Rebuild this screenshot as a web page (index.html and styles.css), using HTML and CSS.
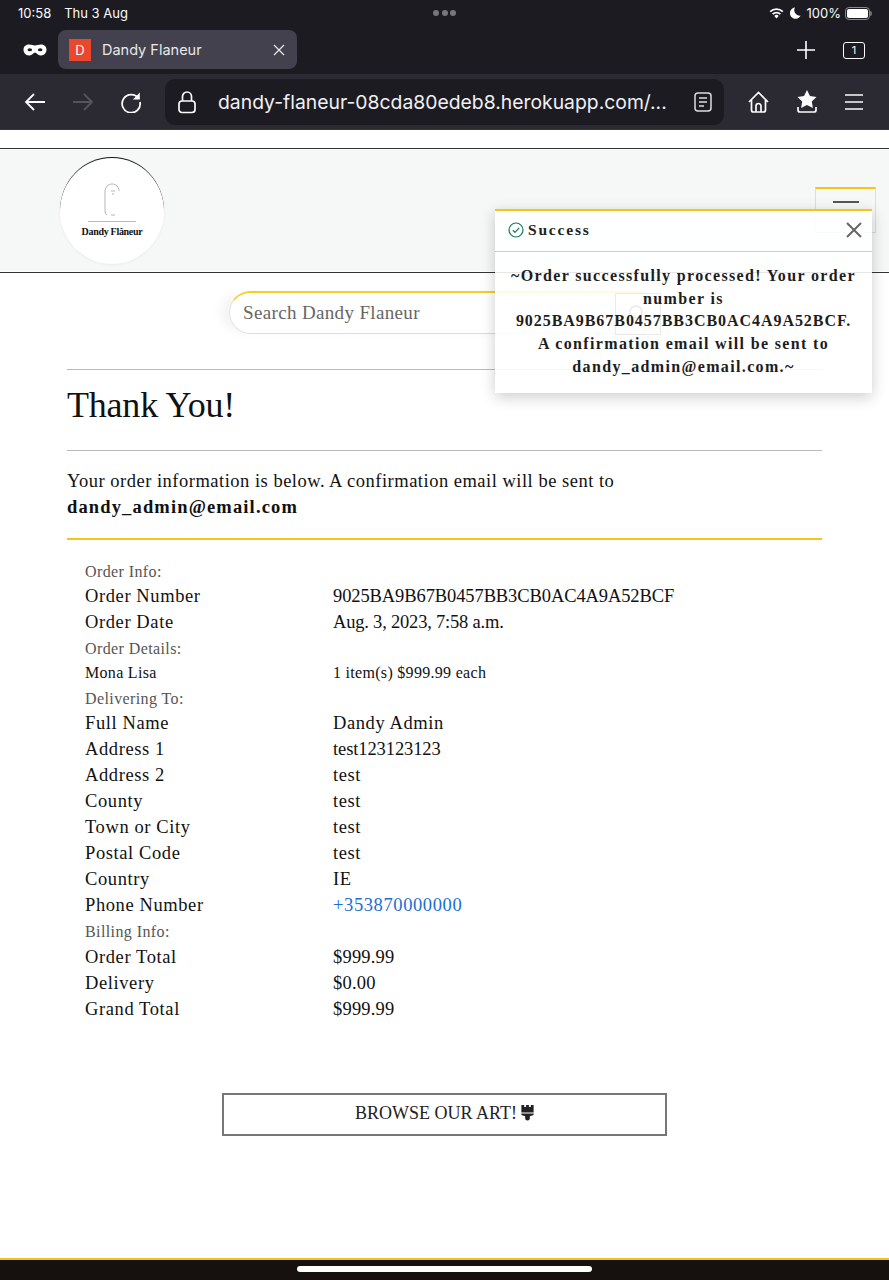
FILE: index.html
```html
<!DOCTYPE html>
<html lang="en">
<head>
<meta charset="utf-8">
<title>Dandy Flaneur</title>
<link rel="stylesheet" href="styles.css">
</head>
<body>
<div class="chrome">
  <div class="status">
    <div class="status-left"><span>10:58</span><span>Thu 3 Aug</span></div>
    <div class="status-dots"><i></i><i></i><i></i></div>
    <div class="status-right">
      <svg width="15" height="12" viewBox="0 0 15 12"><path d="M7.500 11.500 5.300 9a3 3 0 0 1 4.400 0z" fill="#fff"/><path d="M3.600 7.200a5.600 5.600 0 0 1 7.800 0M1.200 4.600a9 9 0 0 1 12.600 0" fill="none" stroke="#fff" stroke-width="1.700"/></svg>
      <svg width="11" height="12" viewBox="0 0 11 12"><path d="M5 .6a5.600 5.600 0 1 0 5.600 8A5.400 5.400 0 0 1 5 .6z" fill="#fff"/></svg>
      <span>100%</span>
      <span class="battery"><span class="battery-fill"></span></span>
    </div>
  </div>
  <div class="tabs">
    <svg class="mask" width="24" height="12" viewBox="0 0 24 12"><path fill-rule="evenodd" fill="#fff" d="M6 .5c2.500 0 4.200 1 6 1s3.500-1 6-1c3.500 0 5.500 2.300 5.500 5.300S21.300 11.500 18 11.500c-3 0-4-2.800-6-2.800s-3 2.800-6 2.800C2.700 11.500.5 8.800.5 5.800S2.500.5 6 .5zM4.500 5.800a2.300 1.500 0 1 0 4.600 0a2.300 1.500 0 1 0-4.600 0zM14.900 5.800a2.300 1.500 0 1 0 4.600 0a2.300 1.500 0 1 0-4.600 0z"/></svg>
    <div class="tab">
      <span class="favicon">D</span>
      <span class="tab-title">Dandy Flaneur</span>
      <svg width="12" height="12" viewBox="0 0 12 12"><path d="M1 1l10 10M11 1 1 11" stroke="#e8e8ea" stroke-width="1.200"/></svg>
    </div>
    <div class="tabs-actions">
      <svg width="18" height="18" viewBox="0 0 18 18"><path d="M9 0v18M0 9h18" stroke="#fff" stroke-width="1.600"/></svg>
      <span class="tab-count">1</span>
    </div>
  </div>
  <div class="toolbar">
    <svg class="tool" width="22" height="18" viewBox="0 0 22 18"><path d="M21 9H2M10 1 2 9l8 8" fill="none" stroke="#fbfbfe" stroke-width="1.800"/></svg>
    <svg class="tool" width="22" height="18" viewBox="0 0 22 18"><path d="M1 9h19M12 1l8 8-8 8" fill="none" stroke="#55545c" stroke-width="1.800"/></svg>
    <svg class="tool" width="22" height="22" viewBox="0 0 22 22"><path d="M18.500 7.500A9 9 0 1 0 20 11" fill="none" stroke="#fbfbfe" stroke-width="1.800"/><path d="M19.800 1.500v7h-7z" fill="#fbfbfe"/></svg>
    <div class="urlbar">
      <svg width="18" height="24" viewBox="0 0 18 24"><path d="M4.500 11V6.500a4.500 4.500 0 0 1 9 0V11" fill="none" stroke="#fbfbfe" stroke-width="1.700"/><rect x="1" y="11" width="16" height="11.500" rx="3" fill="none" stroke="#fbfbfe" stroke-width="1.700"/></svg>
      <span class="url">dandy-flaneur-08cda80edeb8.herokuapp.com/...</span>
      <svg width="18" height="20" viewBox="0 0 18 20"><rect x="1" y="1" width="16" height="18" rx="3" fill="none" stroke="#dcdce0" stroke-width="1.500"/><path d="M5 6h8M5 10h8M5 14h5" stroke="#dcdce0" stroke-width="1.500"/></svg>
    </div>
    <div class="toolbar-right">
      <svg width="21" height="22" viewBox="0 0 21 22"><path d="M1 11 10.500 1.500 20 11M3.500 9v10a2 2 0 0 0 2 2h10a2 2 0 0 0 2-2V9M8 21v-6a2.500 2.500 0 0 1 5 0v6" fill="none" stroke="#fbfbfe" stroke-width="1.700"/></svg>
      <svg width="20" height="23" viewBox="0 0 20 23"><path d="M10 0l3 6 6.500 1-4.700 4.500 1.100 6.500L10 15l-5.900 3 1.100-6.500L.5 7 7 6z" fill="#fbfbfe"/><path d="M1 17v3a2 2 0 0 0 2 2h14a2 2 0 0 0 2-2v-3" fill="none" stroke="#fbfbfe" stroke-width="1.700"/></svg>
      <svg width="18" height="16" viewBox="0 0 18 16"><path d="M0 1h18M0 8h18M0 15h18" stroke="#fbfbfe" stroke-width="1.500"/></svg>
    </div>
  </div>
</div>

<div class="page">
  <header class="site-header">
    <div class="logo">
      <svg width="30" height="36" viewBox="0 0 30 36"><path d="M10 33C8 32 8 30 8 27V10C8 5 11 2 15 2s7 3 7 7" fill="none" stroke="#b5b5b5" stroke-width="1"/><path d="M14 9h4M16 11v2M14 33h4" stroke="#b5b5b5" stroke-width="1"/></svg>
      <span class="logo-rule"></span>
      <span class="logo-name">Dandy Flâneur</span>
    </div>
    <button class="nav-toggle"><span></span></button>
  </header>

  <div class="search-row">
    <div class="search">
      <span class="search-text">Search Dandy Flaneur</span>
      <span class="search-button"><svg width="24" height="24" viewBox="0 0 24 24"><circle cx="10" cy="10" r="6" fill="none" stroke="#444" stroke-width="1.500"/></svg></span>
    </div>
  </div>

  <main class="content">
    <h1 class="title">Thank You!</h1>
    <p class="intro">Your order information is below. A confirmation email will be sent to <strong>dandy_admin@email.com</strong></p>
    <div class="order">
      <div class="section">Order Info:</div>
      <div class="row"><span>Order Number</span><span class="tight">9025BA9B67B0457BB3CB0AC4A9A52BCF</span></div>
      <div class="row"><span>Order Date</span><span class="tighter">Aug. 3, 2023, 7:58 a.m.</span></div>
      <div class="section">Order Details:</div>
      <div class="row small"><span>Mona Lisa</span><span>1 item(s) $999.99 each</span></div>
      <div class="section">Delivering To:</div>
      <div class="row"><span>Full Name</span><span>Dandy Admin</span></div>
      <div class="row"><span>Address 1</span><span class="tight">test123123123</span></div>
      <div class="row"><span>Address 2</span><span>test</span></div>
      <div class="row"><span>County</span><span>test</span></div>
      <div class="row"><span>Town or City</span><span>test</span></div>
      <div class="row"><span>Postal Code</span><span>test</span></div>
      <div class="row"><span>Country</span><span>IE</span></div>
      <div class="row"><span>Phone Number</span><a class="phone" href="#">+353870000000</a></div>
      <div class="section">Billing Info:</div>
      <div class="row"><span>Order Total</span><span class="money">$999.99</span></div>
      <div class="row"><span>Delivery</span><span class="money">$0.00</span></div>
      <div class="row"><span>Grand Total</span><span class="money">$999.99</span></div>
    </div>
    <div class="cta-row">
      <a class="cta" href="#">BROWSE OUR ART!
        <svg width="13" height="16" viewBox="0 0 13 17"><path d="M0 0h3v2h2V0h3v2h2V0h3v8H0z" fill="#222"/><path d="M0 9h13v1.500l-4 1.500v2a2.500 2.500 0 0 1-5 0v-2L0 10.500z" fill="#222"/></svg>
      </a>
    </div>
  </main>

  <aside class="toast">
    <div class="toast-head">
      <svg width="16" height="16" viewBox="0 0 16 16"><circle cx="8" cy="8" r="7" fill="none" stroke="#1a7a5a" stroke-width="1.200"/><path d="M4.800 8.200 7 10.300l4.200-4.500" fill="none" stroke="#1a7a5a" stroke-width="1.200"/></svg>
      <span class="toast-title">Success</span>
      <svg class="toast-close" width="16" height="16" viewBox="0 0 16 16"><path d="M1 1l14 14M15 1 1 15" stroke="#666" stroke-width="2"/></svg>
    </div>
    <p class="toast-body">~Order successfully processed! Your order number is <span class="toast-code">9025BA9B67B0457BB3CB0AC4A9A52BCF.</span> A confirmation email will be sent to dandy_admin@email.com.~</p>
  </aside>

  <footer class="footer"><span class="home-bar"></span></footer>
</div>
</body>
</html>
```
FILE: styles.css
```css
* { box-sizing: border-box; }
html, body { margin: 0; padding: 0; }
body { width: 889px; height: 1280px; overflow: hidden; background: #fff; font-family: "Liberation Serif", serif; color: #111; }
.chrome { font-family: Inter, "Liberation Sans", sans-serif; color: #fbfbfe; }
.status { height: 26px; background: #1c1b22; display: flex; align-items: center; justify-content: space-between; padding: 0 19px 0 18px; font-size: 13px; position: relative; }
.status-left { display: flex; gap: 13px; }
.status-dots { display: flex; gap: 2.500px; position: absolute; left: 433px; top: 10px; }
.status-dots i { width: 6px; height: 6px; border-radius: 50%; background: #77767c; }
.status-right { display: flex; align-items: center; gap: 6px; font-size: 13px; }
.battery { width: 25px; height: 13px; margin-left: -2px; border: 1px solid #8a8a8e; border-radius: 4px; padding: 1px; display: block; position: relative; }
.battery::after { content: ""; position: absolute; right: -3px; top: 3px; width: 2px; height: 5px; background: #6f6f73; border-radius: 0 2px 2px 0; }
.battery-fill { display: block; height: 100%; background: #fff; border-radius: 2px; }
.tabs { height: 48px; background: #1c1b22; display: flex; align-items: center; padding: 0 24px 0 23px; }
.mask { margin-right: 11px; }
.tab { width: 239px; height: 39px; margin-top: -1px; background: #42414d; border-radius: 8px; display: flex; align-items: center; padding: 0 12px 0 11px; font-size: 14.500px; color: #e8e8ea; }
.favicon { width: 22px; height: 22px; background: #e9482d; color: #fff; font-size: 13px; display: flex; align-items: center; justify-content: center; margin-right: 11px; }
.tab-title { flex: 1; }
.tabs-actions { margin-left: auto; display: flex; align-items: center; gap: 28px; }
.tab-count { width: 22px; height: 17px; border: 1.500px solid #fbfbfe; border-radius: 3px; font-size: 11px; display: flex; align-items: center; justify-content: center; }
.toolbar { height: 56px; background: #2b2a33; display: flex; align-items: center; padding: 0 26px 0 24px; border-bottom: 1px solid #3a3944; }
.tool { margin-right: 26px; flex: none; }
.tool:nth-child(3) { margin-right: 23px; }
.urlbar { width: 559px; height: 46px; background: #1c1b22; border-radius: 10px; display: flex; align-items: center; padding: 0 12px 0 13px; }
.url { flex: 1; font-size: 19.350px; margin-left: 22px; white-space: nowrap; overflow: hidden; color: #f0f0f4; }
.toolbar-right { margin-left: auto; display: flex; align-items: center; gap: 28px; }
.page { position: relative; height: 1150px; padding-top: 18px; }
.site-header { height: 125px; background: #f6f8f8; border-top: 1.500px solid #333; border-bottom: 1.500px solid #333; box-shadow: inset 0 1px 0 #fff, inset 0 -1px 0 #fff; position: relative; padding-left: 60px; padding-top: 8px; }
.logo { width: 104px; height: 107px; border-radius: 50%; background: #fff; border-top: 1.500px solid #111; box-shadow: 0 1px 3px rgba(0,0,0,.05); display: flex; flex-direction: column; align-items: center; padding-top: 24px; }
.logo-rule { width: 48px; height: 1px; background: #bbb; margin-top: 3px; }
.logo-name { font-size: 10px; font-weight: 700; margin-top: 4px; white-space: nowrap; letter-spacing: -.3px; }
.nav-toggle { position: absolute; left: 815px; top: 38px; width: 61px; height: 46px; background: transparent; border: 1px solid #ddd; border-top: 2px solid #f5c518; padding: 0; display: flex; justify-content: center; }
.nav-toggle span { width: 26px; height: 2px; background: #555; margin-top: 12px; }
.search-row { padding: 18px 0 0 229px; }
.search { width: 416px; height: 43px; position: relative; border-radius: 22px 0 0 22px; border-top: 2px solid #f5d020; border-bottom: 1px solid #ddd; border-left: 1px solid #e4e4e4; box-shadow: -12px 0 12px -4px #f3f3f3; display: flex; align-items: center; padding-left: 13px; }
.search-text { font-size: 19px; letter-spacing: .35px; color: #666; }
.search-button { position: absolute; left: 385px; top: 0; width: 46px; height: 42px; border: 1px solid #555; display: flex; align-items: center; justify-content: center; }
.content { margin: 35px 67px 0; width: 755px; }
.title { margin: 0; height: 82px; border-top: 1px solid #bbb; border-bottom: 1px solid #bbb; font-size: 36px; font-weight: 400; letter-spacing: -.2px; line-height: 71px; color: #111; }
.intro { margin: 17px 0 0; padding-bottom: 18px; border-bottom: 2px solid #f5c518; font-size: 18.500px; line-height: 26px; letter-spacing: .5px; }
.intro strong { display: block; letter-spacing: 1.150px; }
.order { padding: 18px 0 0 18px; font-size: 18.500px; }
.section { height: 26px; line-height: 27px; font-size: 16px; color: #555; letter-spacing: .4px; }
.section + .row.small + .section { height: 25px; }
.row { height: 26px; line-height: 26px; display: grid; grid-template-columns: 248px 1fr; letter-spacing: .6px; }
.row.small { font-size: 16px; line-height: 24px; height: 24px; letter-spacing: .3px; }
.tight { letter-spacing: -.1px; }
.tighter { letter-spacing: -.2px; }
.money { letter-spacing: .2px; }
.phone { color: #1a6fd4; text-decoration: none; }
.order .section:first-child { height: 25px; }
.cta-row { padding: 71px 0 0 155px; }
.cta { width: 445px; height: 43px; border: 2px solid #777; display: flex; align-items: center; justify-content: center; gap: 4px; padding-bottom: 3px; color: #222; text-decoration: none; font-size: 18px; }
.toast { position: absolute; left: 495px; top: 79px; width: 377px; height: 184px; background: rgba(255,255,255,.88); border-top: 2px solid #f5c518; box-shadow: 0 4px 14px rgba(0,0,0,.2); }
.toast-head { height: 41px; border-bottom: 1px solid #ccc; display: flex; align-items: center; padding: 0 10px 2px 13px; gap: 4px; }
.toast-title { font-size: 15.500px; font-weight: 700; letter-spacing: 1.800px; flex: 1; color: #222; }
.toast-body { margin: 13px 0 0; padding: 0 12px; text-align: center; font-size: 16px; font-weight: 700; line-height: 22.700px; letter-spacing: 1.350px; color: #1d1d1d; }
.toast-code { display: block; letter-spacing: .95px; }
.footer { position: absolute; left: 0; right: 0; top: 1128px; height: 22px; background: #16110f; border-top: 2px solid #e8c81c; display: flex; justify-content: center; }
.home-bar { width: 295px; height: 6px; background: #fff; border-radius: 3px; margin-top: 6px; }
```
